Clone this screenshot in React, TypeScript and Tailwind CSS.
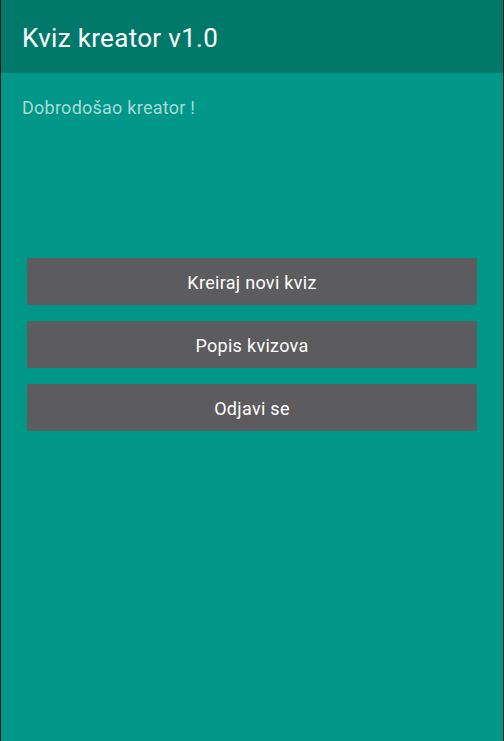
export default function App() {
  const buttons = ["Kreiraj novi kviz", "Popis kvizova", "Odjavi se"];
  return (
    <div
      className="flex h-[741px] w-[504px] flex-col border-x border-[#1a1a1a] bg-[#009688]"
      style={{ fontFamily: "Roboto, 'Noto Sans', sans-serif" }}
    >
      <header className="flex h-[73px] shrink-0 items-center bg-[#00796b] pl-[21px]">
        <h1 className="pt-[2px] text-[26px] leading-none tracking-[0.32px] text-white">Kviz kreator v1.0</h1>
      </header>
      <main className="flex flex-col px-[21px] pt-[24px]">
        <p className="text-[18px] leading-[21px] tracking-[0.25px] text-[#a6dcd5]">Dobrodošao kreator !</p>
        <div className="mt-[140px] flex flex-col gap-[16px] px-[5px]">
          {buttons.map((b) => (
            <button
              key={b}
              className="h-[47px] w-full rounded-[2px] bg-[#5c5b5d] pt-[1px] text-[18px] tracking-[0.3px] text-white"
            >
              {b}
            </button>
          ))}
        </div>
      </main>
    </div>
  );
}
